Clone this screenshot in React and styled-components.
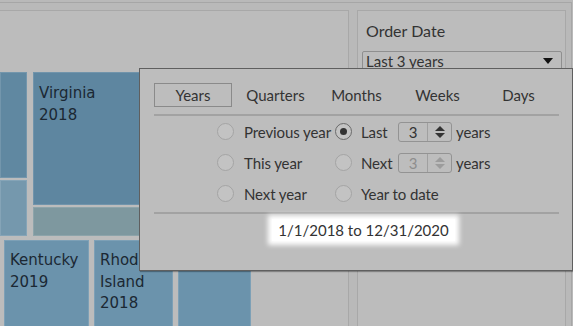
import styled, { createGlobalStyle } from "styled-components";

const GlobalStyle = createGlobalStyle`
  body {
    margin: 0;
    background: #b9b9b9;
    font-family: Lato, "Open Sans", sans-serif;
  }
`;

const Frame = styled.div`
  position: relative;
  width: 573px;
  height: 326px;
  overflow: hidden;
  padding-top: 2px;
  box-sizing: border-box;
`;

const Shell = styled.div`
  width: 572px;
  height: 324px;
  box-sizing: border-box;
  border-top: 1px solid #a6a6a6;
  border-right: 1px solid #a6a6a6;
  padding-top: 7px;
  display: flex;
  gap: 8px;
`;

const Panel = styled.div`
  box-sizing: border-box;
  width: ${(p) => p.$w}px;
  height: 330px;
  border: 1px solid #a8a8a8;
  border-left: ${(p) => (p.$noLeft ? "none" : "1px solid #a8a8a8")};
  background: #bcbcbc;
  overflow: hidden;
`;

const Treemap = styled.div`
  padding-top: 61px;
  display: flex;
  flex-direction: column;
  gap: 4px;
`;

const TopRow = styled.div`
  display: flex;
  gap: 6px;
  height: 164px;
`;

const TileColumn = styled.div`
  display: flex;
  flex-direction: column;
  gap: 2px;
  width: ${(p) => p.$w}px;
  flex-shrink: 0;
`;

const Tile = styled.div`
  box-sizing: border-box;
  background: ${(p) => p.$bg};
  height: ${(p) => (p.$h ? `${p.$h}px` : "auto")};
  width: ${(p) => (p.$w ? `${p.$w}px` : "auto")};
  flex-shrink: 0;
  border: 1px solid rgba(255, 255, 255, 0.12);
  padding: ${(p) => p.$pt ?? 8}px 5px 0;
  color: #1b2833;
  font-family: "DejaVu Sans", Verdana, sans-serif;
  font-size: 15px;
  line-height: 21.5px;
  white-space: nowrap;
  overflow: hidden;
`;

const BottomRow = styled.div`
  display: flex;
  gap: 5px;
  padding-left: 4px;
  height: 90px;
`;

const FilterTitle = styled.div`
  padding: 10px 0 0 8px;
  font-size: 16px;
  line-height: 19px;
  color: #333;
`;

const Dropdown = styled.div`
  margin: 11px 0 0 4px;
  width: 200px;
  height: 20px;
  box-sizing: border-box;
  border: 1px solid #8f8f8f;
  border-radius: 2px;
  display: flex;
  align-items: center;
  justify-content: space-between;
  padding: 0 8px 0 3px;
  font-size: 15px;
  color: #333;
`;

const Caret = styled.span`
  width: 0;
  height: 0;
  border-left: 5px solid transparent;
  border-right: 5px solid transparent;
  border-top: 6px solid #111;
`;

const Popup = styled.div`
  position: absolute;
  left: 139px;
  top: 68px;
  width: 434px;
  height: 203px;
  box-sizing: border-box;
  background: #bdbdbd;
  border: 1px solid #5f5f5f;
  box-shadow: 1px 1px 1px rgba(0, 0, 0, 0.3);
  padding: 14px 13px 0 14px;
  color: #333;
  font-size: 15px;
`;

const Tabs = styled.div`
  display: grid;
  grid-template-columns: repeat(5, 81px);
  height: 24px;
`;

const Tab = styled.div`
  box-sizing: border-box;
  width: ${(p) => (p.$active ? "78px" : "auto")};
  border: 1px solid ${(p) => (p.$active ? "#8a8a8a" : "transparent")};
  display: flex;
  align-items: center;
  justify-content: center;
`;

const Divider = styled.div`
  height: 2px;
  background: #a2a2a2;
  margin-top: ${(p) => p.$mt}px;
`;

const Options = styled.div`
  display: grid;
  grid-template-columns: 118px auto;
  grid-auto-rows: 31px;
  padding-left: 63px;
`;

const Option = styled.div`
  display: flex;
  align-items: center;
  white-space: nowrap;
  letter-spacing: -0.1px;
`;

const Radio = styled.span`
  box-sizing: border-box;
  width: 17px;
  height: 17px;
  margin-right: ${(p) => p.$gap}px;
  border-radius: 50%;
  border: 1px solid ${(p) => (p.$on ? "#6a6a6a" : "#a4a4a4")};
  background: #c3c3c3;
  display: flex;
  align-items: center;
  justify-content: center;
  flex-shrink: 0;
  &::after {
    content: "";
    width: 7px;
    height: 7px;
    border-radius: 50%;
    background: ${(p) => (p.$on ? "#333" : "transparent")};
  }
`;

const ShortLabel = styled.span`
  width: 37px;
`;

const Spinner = styled.div`
  box-sizing: border-box;
  width: 54px;
  height: 20px;
  border: 1px solid #939393;
  border-radius: 3px;
  display: flex;
  color: ${(p) => (p.$disabled ? "#8e8e8e" : "#333")};
  margin-right: 4px;
`;

const SpinValue = styled.span`
  width: 28px;
  border-right: 1px solid #a0a0a0;
  display: flex;
  align-items: center;
  justify-content: center;
`;

const SpinArrows = styled.span`
  flex: 1;
  display: flex;
  flex-direction: column;
  align-items: center;
  justify-content: center;
  gap: 2px;
  &::before,
  &::after {
    content: "";
    width: 0;
    height: 0;
    border-left: 5px solid transparent;
    border-right: 5px solid transparent;
  }
  &::before {
    border-bottom: 5px solid ${(p) => (p.$disabled ? "#9c9c9c" : "#333")};
  }
  &::after {
    border-top: 5px solid ${(p) => (p.$disabled ? "#9c9c9c" : "#333")};
  }
`;

const DateRow = styled.div`
  display: flex;
  justify-content: center;
  padding: 5px 0 0 14px;
`;

const DateRange = styled.span`
  background: #fff;
  box-shadow: 0 0 5px 4px #fff;
  padding: 2px 6px;
  line-height: 18px;
  color: #333;
`;

export default function App() {
  return (
    <Frame>
      <GlobalStyle />
      <Shell>
        <Panel $w={349} $noLeft>
          <Treemap>
            <TopRow>
              <TileColumn $w={27}>
                <Tile $bg="#6088a1" $h={106} />
                <Tile $bg="#7598ad" $h={56} />
              </TileColumn>
              <TileColumn $w={280}>
                <Tile $bg="#5e86a0" $h={133} $pt={10}>
                  Virginia
                  <br />
                  2018
                </Tile>
                <Tile $bg="#7e989f" $h={29} />
              </TileColumn>
            </TopRow>
            <BottomRow>
              <Tile $bg="#6b93ac" $w={85} $pt={9}>
                Kentucky
                <br />
                2019
              </Tile>
              <Tile $bg="#6b93ac" $w={79} $pt={9}>
                Rhode
                <br />
                Island
                <br />
                2018
              </Tile>
              <Tile $bg="#6b93ac" $w={73} />
            </BottomRow>
          </Treemap>
        </Panel>
        <Panel $w={209}>
          <FilterTitle>Order Date</FilterTitle>
          <Dropdown>
            Last 3 years
            <Caret />
          </Dropdown>
        </Panel>
      </Shell>
      <Popup>
        <Tabs>
          <Tab $active>Years</Tab>
          <Tab>Quarters</Tab>
          <Tab>Months</Tab>
          <Tab>Weeks</Tab>
          <Tab>Days</Tab>
        </Tabs>
        <Divider $mt={7} />
        <Options>
          <Option>
            <Radio $gap={10} />
            Previous year
          </Option>
          <Option>
            <Radio $gap={9} $on />
            <ShortLabel>Last</ShortLabel>
            <Spinner>
              <SpinValue>3</SpinValue>
              <SpinArrows />
            </Spinner>
            years
          </Option>
          <Option>
            <Radio $gap={10} />
            This year
          </Option>
          <Option>
            <Radio $gap={9} />
            <ShortLabel>Next</ShortLabel>
            <Spinner $disabled>
              <SpinValue>3</SpinValue>
              <SpinArrows $disabled />
            </Spinner>
            years
          </Option>
          <Option>
            <Radio $gap={10} />
            Next year
          </Option>
          <Option>
            <Radio $gap={9} />
            Year to date
          </Option>
        </Options>
        <Divider $mt={3} />
        <DateRow>
          <DateRange>1/1/2018 to 12/31/2020</DateRange>
        </DateRow>
      </Popup>
    </Frame>
  );
}
